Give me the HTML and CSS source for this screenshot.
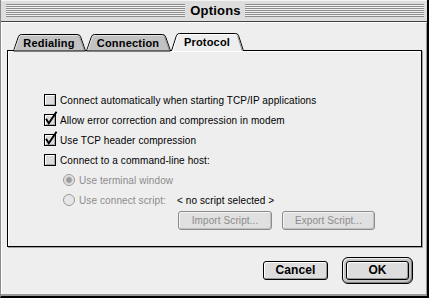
FILE: index.html
```html
<!DOCTYPE html>
<html>
<head>
<meta charset="utf-8">
<link rel="stylesheet" href="styles.css">
</head>
<body>
<div class="window">
  <div class="titlebar">
    <div class="stripes"></div>
    <div class="title">Options</div>
    <div class="stripes"></div>
  </div>
  <div class="content">
    <svg class="tabs" width="415" height="18" viewBox="0 0 415 18">
      <g class="tab-off">
        <path class="fill" d="M6.5,18 L11.5,3.5 Q12.3,1.5 14.5,1.5 L70.5,1.5 Q72.7,1.5 73.5,3.5 L78.5,18 Z"/>
        <path class="hi" d="M7.8,17 L12.6,3.8 Q13.2,2.5 14.5,2.5 L70,2.5"/>
        <path class="sh" d="M72.6,3.8 L77.3,17"/>
        <text x="42" y="14">Redialing</text>
      </g>
      <g class="tab-off">
        <path class="fill" d="M79.5,18 L84.5,3.5 Q85.3,1.5 87.5,1.5 L155.5,1.5 Q157.7,1.5 158.5,3.5 L163.5,18 Z"/>
        <path class="hi" d="M80.8,17 L85.6,3.8 Q86.2,2.5 87.5,2.5 L155,2.5"/>
        <path class="sh" d="M157.6,3.8 L162.3,17"/>
        <text x="121" y="14">Connection</text>
      </g>
      <g class="tab-on">
        <path class="fill" d="M164.5,18 L169.5,2.5 Q170.3,0.5 172.5,0.5 L228.5,0.5 Q230.7,0.5 231.5,2.5 L236.5,18"/>
        <path class="hi" d="M165.8,18 L170.6,2.8 Q171.2,1.5 172.5,1.5 L228,1.5"/>
        <path class="sh" d="M230.6,2.8 L235.3,18"/>
        <text x="200" y="13">Protocol</text>
      </g>
    </svg>
    <div class="panel">
      <div class="row">
        <svg class="cb" width="12" height="12" viewBox="0 0 12 12"><rect x=".5" y=".5" width="11" height="11" class="box"/><path class="hi" d="M1.5,10 V1.5 H10"/><path class="sh" d="M10.5,2 V10.5 H2"/></svg>
        <span>Connect automatically when starting TCP/IP applications</span>
      </div>
      <div class="row">
        <svg class="cb" width="12" height="12" viewBox="0 0 12 12"><rect x=".5" y=".5" width="11" height="11" class="box"/><path class="hi" d="M1.5,10 V1.5 H10"/><path class="sh" d="M10.5,2 V10.5 H2"/><path class="tick" d="M2.5,5.5 L4.8,9.3 L12,-1.5"/></svg>
        <span>Allow error correction and compression in modem</span>
      </div>
      <div class="row">
        <svg class="cb" width="12" height="12" viewBox="0 0 12 12"><rect x=".5" y=".5" width="11" height="11" class="box"/><path class="hi" d="M1.5,10 V1.5 H10"/><path class="sh" d="M10.5,2 V10.5 H2"/><path class="tick" d="M2.5,5.5 L4.8,9.3 L12,-1.5"/></svg>
        <span>Use TCP header compression</span>
      </div>
      <div class="row">
        <svg class="cb" width="12" height="12" viewBox="0 0 12 12"><rect x=".5" y=".5" width="11" height="11" class="box"/><path class="hi" d="M1.5,10 V1.5 H10"/><path class="sh" d="M10.5,2 V10.5 H2"/></svg>
        <span>Connect to a command-line host:</span>
      </div>
      <div class="row sub disabled">
        <svg class="rb" width="12" height="12" viewBox="0 0 12 12"><circle cx="6" cy="6" r="5.5" class="ring"/><circle cx="6" cy="6" r="3.2" class="dot"/></svg>
        <span>Use terminal window</span>
      </div>
      <div class="row sub disabled">
        <svg class="rb" width="12" height="12" viewBox="0 0 12 12"><circle cx="6" cy="6" r="5.5" class="ring"/></svg>
        <span class="lbl">Use connect script:</span>
        <span class="script">&lt; no script selected &gt;</span>
      </div>
      <div class="btnrow">
        <button class="btn dis w-import">Import Script...</button>
        <button class="btn dis w-export">Export Script...</button>
      </div>
    </div>
    <div class="footer">
      <button class="btn bold w-cancel">Cancel</button>
      <div class="default-ring"><button class="btn bold w-ok">OK</button></div>
    </div>
  </div>
</div>
</body>
</html>
```

FILE: styles.css
```css
html, body {
  margin: 0;
  padding: 0;
  background: #eeeeee;
}
body {
  width: 429px;
  height: 298px;
  overflow: hidden;
  font-family: "Liberation Sans", Arial, sans-serif;
  font-size: 10px;
  letter-spacing: 0.1px;
  color: #000;
}
.window {
  box-sizing: border-box;
  width: 429px;
  height: 298px;
  background: #eeeeee;
  border-left: 1px solid #8a8a8a;
  border-right: 2px solid #000;
  border-bottom: 2px solid #000;
  box-shadow: inset -1px -2px 0 #999, inset 1px 0 0 #fff;
  display: flex;
  flex-direction: column;
}
.titlebar {
  height: 21px;
  background: #dddddd;
  border-bottom: 1px solid #444;
  display: flex;
  align-items: center;
  padding: 0 3px 0 5px;
  box-shadow: inset 0 1px 0 #f4f4f4;
}
.stripes {
  flex: 1;
  height: 13px;
  background: repeating-linear-gradient(to bottom, #8c8c8c 0, #8c8c8c 1px, #f2f2f2 1px, #f2f2f2 2px);
}
.title {
  font-weight: bold;
  font-size: 13px;
  padding: 0 4px 0 5px;
  line-height: 16px;
  letter-spacing: 0.2px;
}
.content {
  padding: 11px 0 0 6px;
  display: flex;
  flex-direction: column;
  box-shadow: inset 0 1px 0 #fff;
}
.tabs {
  display: block;
  position: relative;
  z-index: 1;
  margin-bottom: -1px;
  overflow: visible;
}
.tabs path { fill: none; stroke-width: 1; }
.tabs .fill { stroke: #000; }
.tab-off .fill { fill: #c2c2c2; }
.tab-on .fill { fill: #eeeeee; }
.tabs .hi { stroke: #fff; }
.tab-off .hi { stroke: #e2e2e2; }
.tabs .sh { stroke: #8e8e8e; }
.tabs text {
  font-family: "Liberation Sans", Arial, sans-serif;
  font-weight: bold;
  font-size: 11px;
  letter-spacing: 0.2px;
  text-anchor: middle;
  fill: #000;
}
.panel {
  box-sizing: border-box;
  width: 415px;
  height: 197px;
  border: 1px solid #000;
  box-shadow: 1px 1px 0 #a0a0a0, inset 1px 1px 0 #fff;
  padding: 39px 0 0 36px;
  display: flex;
  flex-direction: column;
}
.row {
  display: flex;
  align-items: center;
  height: 20px;
  gap: 4px;
  white-space: nowrap;
}
.row.sub { margin-left: 19px; }
.disabled { color: #8c8c8c; }
.cb, .rb { overflow: visible; flex: none; }
.cb .box { fill: #dcdcdc; stroke: #000; }
.cb .hi { fill: none; stroke: #fff; }
.cb .sh { fill: none; stroke: #a8a8a8; }
.cb .tick { fill: none; stroke: #000; stroke-width: 1.9; stroke-linecap: square; }
.rb .ring { fill: #e6e6e6; stroke: #9a9a9a; }
.rb .dot { fill: #9a9a9a; stroke: #c8c8c8; stroke-width: 1; }
.lbl { width: 94px; }
.script { color: #000; }
.btnrow {
  display: flex;
  gap: 10px;
  margin: 1px 0 0 134px;
}
.btn {
  box-sizing: border-box;
  height: 19px;
  padding: 0;
  margin: 0;
  font-family: "Liberation Sans", Arial, sans-serif;
  font-size: 10px;
  letter-spacing: 0.1px;
  background: #dddddd;
  border: 1px solid #000;
  border-radius: 3px;
  box-shadow: inset 1px 1px 0 #fff, inset -1px -1px 0 #999;
  color: #000;
  line-height: 17px;
}
.btn.dis {
  border-color: #8c8c8c;
  color: #8c8c8c;
  background: #e0e0e0;
  box-shadow: inset 1px 1px 0 #f4f4f4, inset -1px -1px 0 #c0c0c0;
}
.btn.bold {
  font-weight: bold;
  font-size: 12px;
}
.w-import { width: 94px; }
.w-export { width: 93px; }
.w-cancel { width: 65px; }
.w-ok { width: 63px; }
.footer {
  display: flex;
  justify-content: flex-end;
  align-items: center;
  gap: 14px;
  margin-top: 10px;
  padding-right: 14px;
}
.default-ring {
  border: 1px solid #000;
  border-radius: 6px;
  padding: 3px;
  background: #c4c4c4;
  box-shadow: inset 1px 1px 0 #f0f0f0, inset -1px -1px 0 #808080;
  display: flex;
}
```
